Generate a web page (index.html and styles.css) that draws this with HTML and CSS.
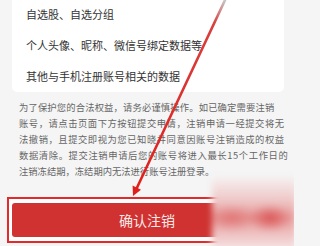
FILE: index.html
```html
<!DOCTYPE html>
<html lang="zh">
<head>
<meta charset="utf-8">
<link rel="stylesheet" href="styles.css">
</head>
<body>
<div class="page">
  <div class="card">
    <div class="row">自选股、自选分组</div>
    <div class="row">个人头像、昵称、微信号绑定数据等</div>
    <div class="row">其他与手机注册账号相关的数据</div>
  </div>
  <p class="notice">
    <span class="line l1">为了保护您的合法权益，请务必谨慎操作。如已确定需要注销</span>
    <span class="line l2">账号，请点击页面下方按钮提交申请，注销申请一经提交将无</span>
    <span class="line l3">法撤销，且提交即视为您已知晓并同意因账号注销造成的权益</span>
    <span class="line l4">数据清除。提交注销申请后您的账号将进入最长15个工作日的</span>
    <span class="line l5">注销冻结期，冻结期内无法进行账号注册登录。</span>
  </p>
  <div class="mark-box">
    <button class="confirm">确认注销</button>
  </div>
  <svg class="arrow" width="294" height="246" viewBox="0 0 294 246">
    <defs>
      <linearGradient id="ag" x1="225" y1="0" x2="136" y2="190" gradientUnits="userSpaceOnUse">
        <stop offset="0" stop-color="#c8c8c8"/>
        <stop offset="0.12" stop-color="#d8403e"/>
        <stop offset="1" stop-color="#e01f1c"/>
      </linearGradient>
    </defs>
    <line x1="226" y1="-2" x2="136.6" y2="188.5" stroke="url(#ag)" stroke-width="2.6" stroke-linecap="round"/>
    <polygon points="133,196 141,189.8 132.6,185.6" fill="#e01f1c"/>
  </svg>
  <div class="blur"></div>
</div>
</body>
</html>
```
FILE: styles.css
```css
html, body {
  margin: 0;
  padding: 0;
}
body {
  background: #f5f5f5;
  font-family: "Noto Sans CJK SC", "Noto Sans", sans-serif;
  width: 294px;
  height: 246px;
  overflow: hidden;
}
.page {
  position: relative;
  width: 294px;
  height: 246px;
  overflow: hidden;
}
.card {
  background: #fff;
  margin: -1px 10px 0 12px;
  border-radius: 0 0 5px 5px;
}
.row {
  height: 31px;
  line-height: 31px;
  padding-left: 14px;
  font-size: 11px;
  color: #333;
}
.notice {
  margin: 7px 0 0;
  padding: 0 19px;
  font-size: 9.3px;
  line-height: 16px;
  color: #666;
}
.line {
  display: block;
  white-space: nowrap;
}
.l1 { letter-spacing: 0.16px; }
.l2 { letter-spacing: 0.54px; }
.l3 { letter-spacing: 0.54px; }
.l4 { letter-spacing: 0.62px; }
.l5 { letter-spacing: 0; }
.mark-box {
  margin: 18px 7px 0;
  border: 2px solid #e4292a;
  background: #fff;
  padding: 4px 3px;
}
.confirm {
  display: block;
  width: 100%;
  height: 34px;
  border: 0;
  border-radius: 3px;
  background: #cf3231;
  color: #fbe9e9;
  font-family: "Noto Sans CJK SC", "Noto Sans", sans-serif;
  font-size: 14px;
  padding: 0;
}
.arrow {
  position: absolute;
  left: 0;
  top: 0;
}
.blur {
  position: absolute;
  left: 212px;
  top: 178px;
  width: 84px;
  height: 72px;
  background:
    radial-gradient(ellipse 22px 14px at 58px 40px, rgba(214, 60, 60, 0.75), rgba(214, 60, 60, 0) 100%),
    radial-gradient(ellipse 26px 14px at 20px 40px, rgba(220, 90, 90, 0.6), rgba(220, 90, 90, 0) 100%),
    linear-gradient(to bottom, #f5eeee 0%, #efc9c9 30%, #e79a9a 55%, #efc6c6 80%, #f6e6e6 100%);
  filter: blur(3px);
}
```
